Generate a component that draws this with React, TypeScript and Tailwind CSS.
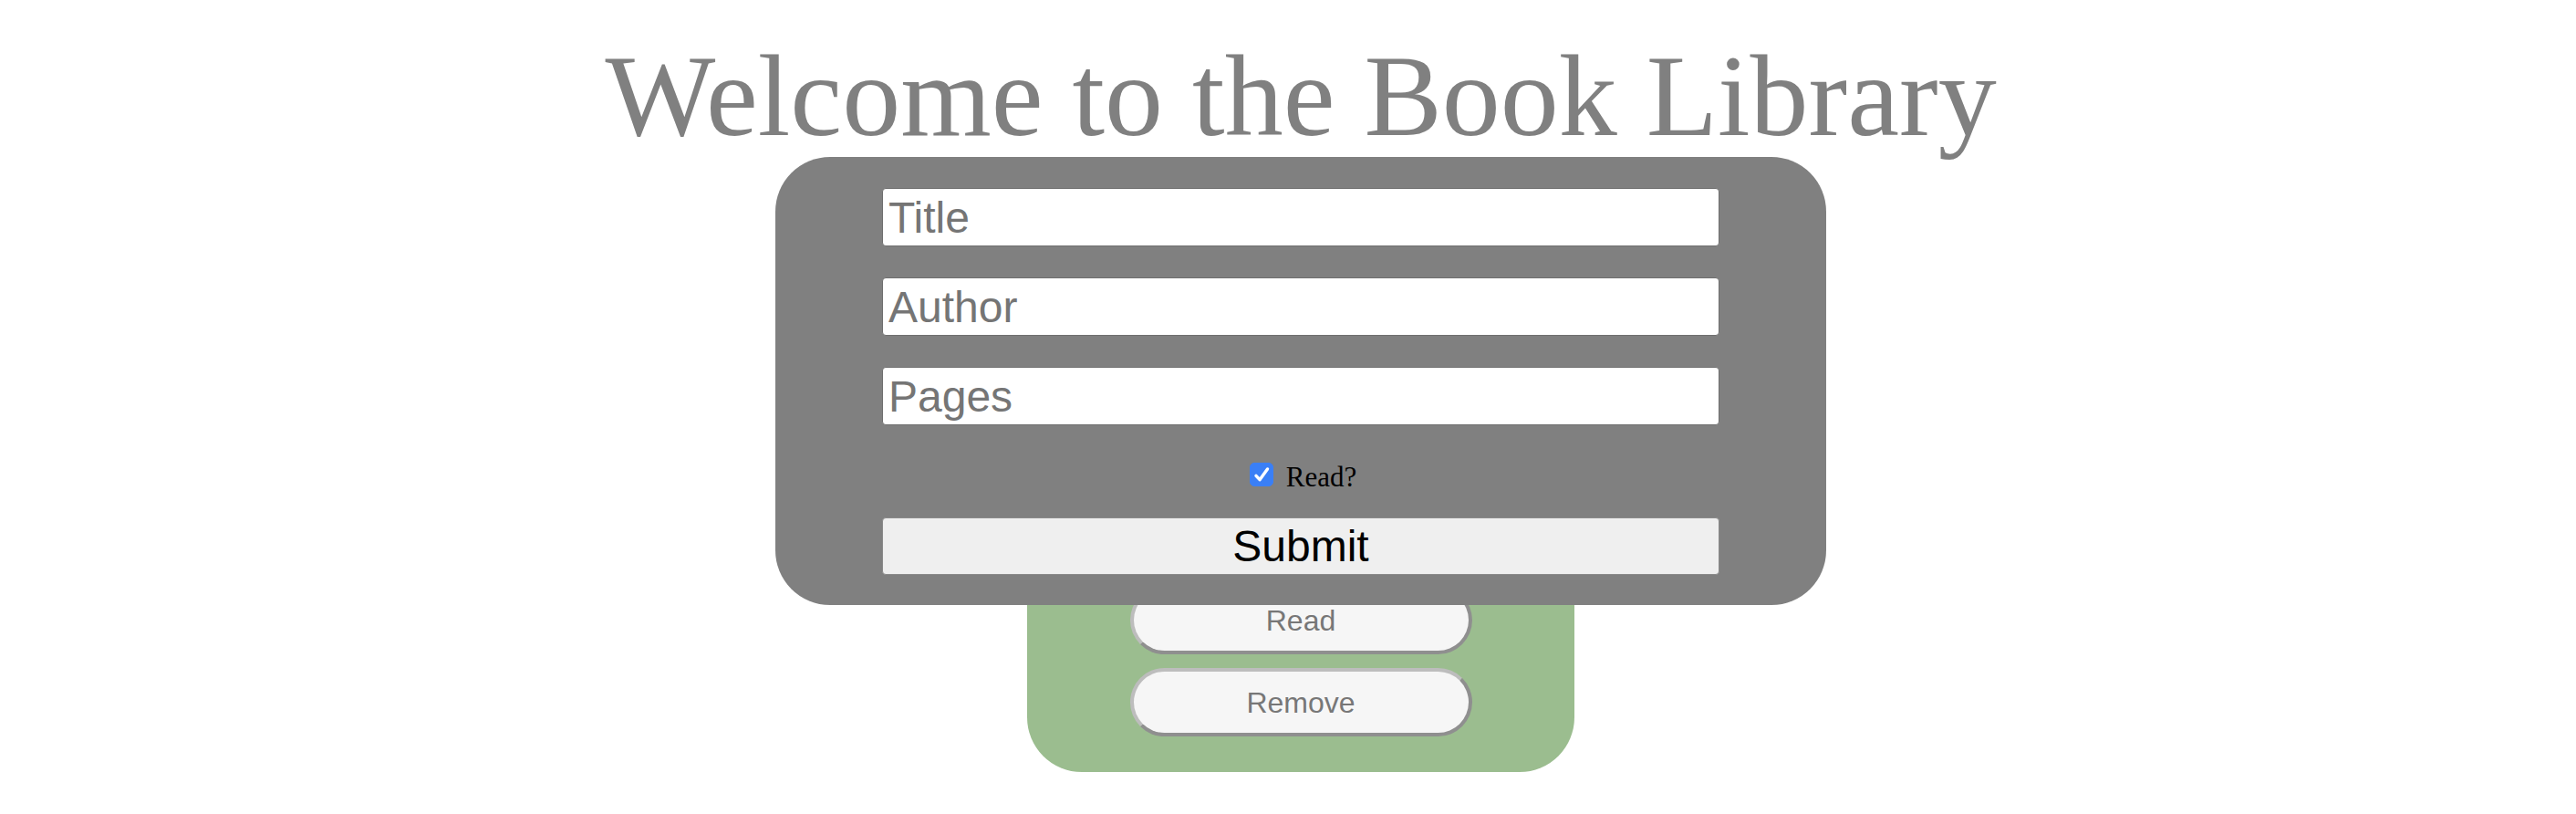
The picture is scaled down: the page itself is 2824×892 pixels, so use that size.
import { useState } from "react";

const fieldClass =
  "h-[64px] w-[918px] rounded-[4px] border border-[#6f6f6f] bg-white px-[6px] text-[48px] leading-none text-black outline-none placeholder:text-[#757575]";

const pillClass =
  "h-[75px] w-[375px] rounded-full border-4 border-t-[#bdbdbd] border-l-[#bdbdbd] border-r-[#8f8f8f] border-b-[#8f8f8f] bg-[#f6f6f6] text-[32px] leading-none text-[#777777]";

export default function App() {
  const [title, setTitle] = useState("");
  const [author, setAuthor] = useState("");
  const [pages, setPages] = useState("");
  const [read, setRead] = useState(true);

  return (
    <div className="flex min-h-screen flex-col items-center bg-white pl-[28px] font-['Liberation_Sans',Arial,sans-serif]">
      <h1 className="mt-[41px] whitespace-nowrap font-['Liberation_Serif','Times_New_Roman',serif] text-[128px] font-normal leading-[128px] text-[#808080]">
        Welcome to the Book Library
      </h1>

      <form
        onSubmit={(e) => e.preventDefault()}
        className="relative z-10 mt-[3px] flex w-[1152px] flex-col items-center rounded-[60px] bg-[#808080] pt-[34px] pb-[33px]"
      >
        <input
          value={title}
          onChange={(e) => setTitle(e.target.value)}
          placeholder="Title"
          className={fieldClass}
        />
        <input
          value={author}
          onChange={(e) => setAuthor(e.target.value)}
          placeholder="Author"
          className={`mt-[34px] ${fieldClass}`}
        />
        <input
          value={pages}
          onChange={(e) => setPages(e.target.value)}
          placeholder="Pages"
          className={`mt-[34px] ${fieldClass}`}
        />

        <label className="mt-[41px] ml-[5px] flex h-[26px] items-start gap-[14px]">
          <span className="relative block h-[26px] w-[26px]">
            <input
              type="checkbox"
              checked={read}
              onChange={(e) => setRead(e.target.checked)}
              className="peer m-0 block h-[26px] w-[26px] appearance-none rounded-[5px] border border-[#767676] bg-white checked:border-[#3a7ff6] checked:bg-[#3a7ff6]"
            />
            <svg
              viewBox="0 0 26 26"
              className="pointer-events-none absolute inset-0 hidden h-[26px] w-[26px] peer-checked:block"
            >
              <path
                d="M7 14.3 L11 18.7 L19.5 7"
                stroke="white"
                strokeWidth="3.4"
                fill="none"
                strokeLinecap="round"
                strokeLinejoin="round"
              />
            </svg>
          </span>
          <span className="font-['Liberation_Serif','Times_New_Roman',serif] text-[31px] leading-[31px] text-black">
            Read?
          </span>
        </label>

        <button
          type="submit"
          className="mt-[34px] h-[63px] w-[918px] rounded-[4px] border border-[#8a8a8a] bg-[#efefef] text-[48px] leading-none text-black"
        >
          Submit
        </button>
      </form>

      <div className="-mt-[63px] flex w-[600px] flex-col items-center gap-[15px] rounded-[60px] bg-[#9bbd8f] pt-[42px] pb-[39px]">
        <button className={pillClass}>Read</button>
        <button className={pillClass}>Remove</button>
      </div>
    </div>
  );
}
